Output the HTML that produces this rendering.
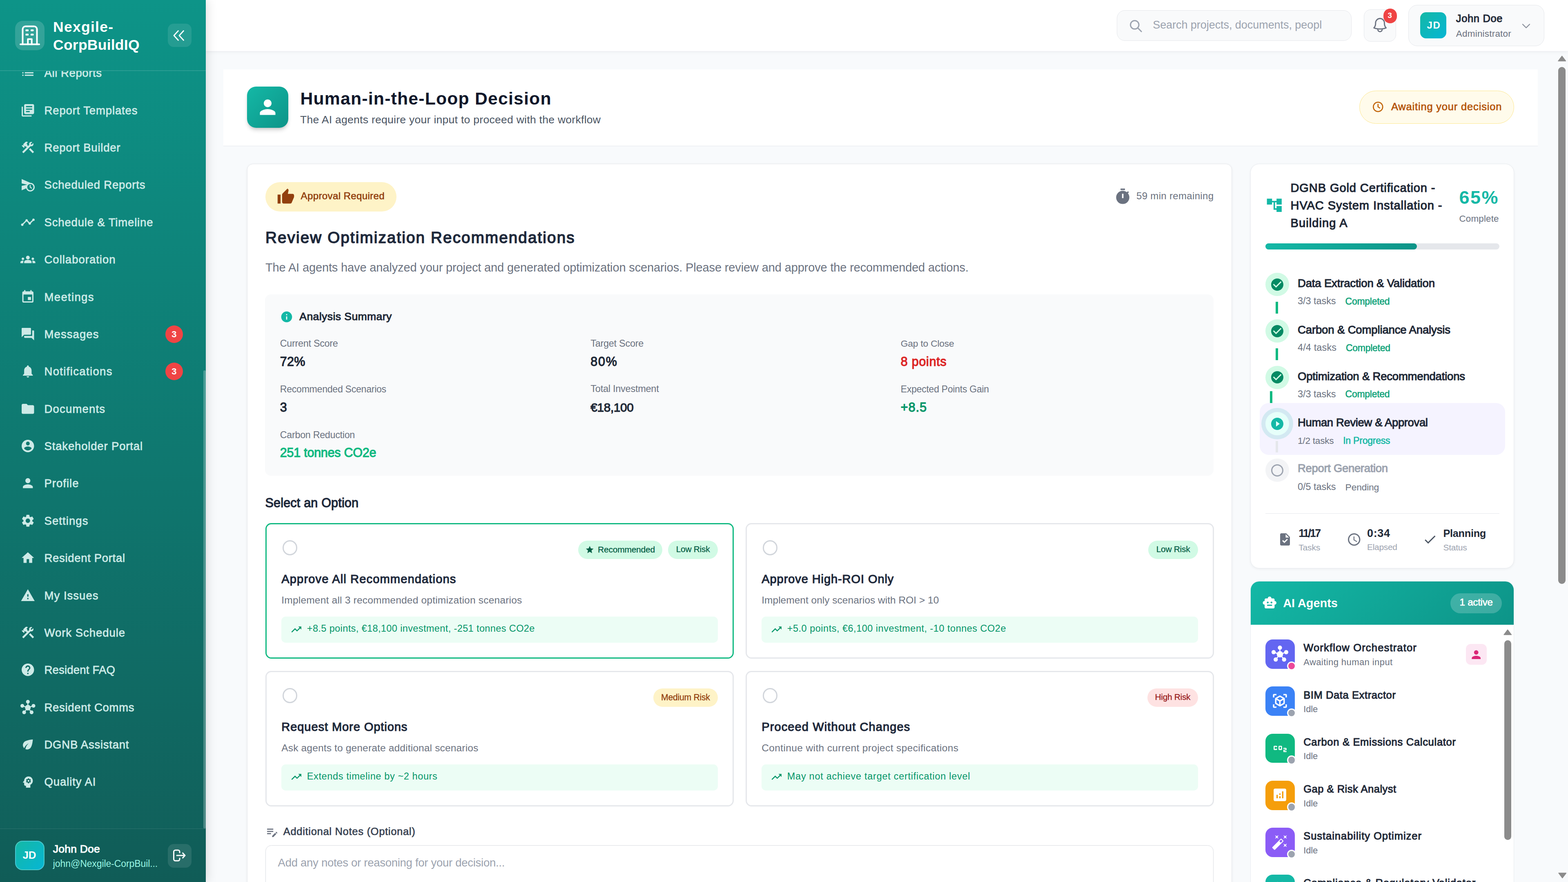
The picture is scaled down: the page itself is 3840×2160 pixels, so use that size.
<!DOCTYPE html><html lang="en"><head><meta charset="utf-8"><title>Human-in-the-Loop Decision - Nexgile-CorpBuildIQ</title><style>
*{box-sizing:border-box;margin:0;padding:0}
html,body{width:3840px;height:2160px;overflow:hidden;background:#f8fafc;font-family:"Liberation Sans",sans-serif}
body{position:relative}
.t{position:absolute;white-space:nowrap;line-height:1;display:block}
.i{position:absolute;display:block}
li{list-style:none}
</style></head><body><main><div style="position:absolute;left:547.0px;top:169.5px;width:3218.5px;height:188.0px;background:#fff;border-bottom:1.8px solid #e5e7eb;"></div><section><div style="position:absolute;left:604.5px;top:212.0px;width:101.0px;height:101.0px;border-radius:22px;background:linear-gradient(135deg,#14b8a6,#0d9488);box-shadow:0 7px 11px -2px rgba(0,0,0,.18),0 3px 6px -2px rgba(0,0,0,.1);"></div><svg class="i" style="left:626.5px;top:234.0px;" width="57.0" height="57.0" viewBox="0 0 24 24"><path fill="#fff" d="M12 12c2.21 0 4-1.79 4-4s-1.79-4-4-4-4 1.79-4 4 1.79 4 4 4zm0 2c-2.67 0-8 1.34-8 4v2h16v-2c0-2.66-5.33-4-8-4z"/></svg><h1 id="t1" class="t" style="left:735.5px;top:219.6px;font-size:42.70px;font-weight:bold;color:#0f172a;letter-spacing:1.225px;">Human-in-the-Loop Decision</h1><p id="t2" class="t" style="left:735.0px;top:280.0px;font-size:26.50px;font-weight:normal;color:#4b5563;letter-spacing:0.286px;">The AI agents require your input to proceed with the workflow</p><div style="position:absolute;left:3328.5px;top:222.0px;width:379.5px;height:81.0px;border-radius:41px;background:#fffbeb;border:1.8px solid #fde68a;"></div><svg class="i" style="left:3361.0px;top:247.5px" width="27.5" height="27.5" viewBox="0 0 24 24"><circle cx="12" cy="12" r="10" fill="none" stroke="#c2650a" stroke-width="2.3"/><path d="M12 6.5V12l3.6 2.3" fill="none" stroke="#c2650a" stroke-width="2.3" stroke-linecap="round" stroke-linejoin="round"/></svg><span id="t3" class="t" style="left:3406.9px;top:248.8px;font-size:25.50px;font-weight:normal;color:#b45309;-webkit-text-stroke:0.71px #b45309;letter-spacing:0.821px;">Awaiting your decision</span></section><section><div style="position:absolute;left:604.5px;top:401.0px;width:2412.0px;height:1900.0px;background:#fff;border:1.8px solid #e5e7eb;border-radius:14.4px;box-shadow:0 2px 6px rgba(0,0,0,.06);"></div><div style="position:absolute;left:650.0px;top:446.0px;width:321.0px;height:72.0px;border-radius:36px;background:#fef3c7;"></div><svg class="i" style="left:678.3px;top:459.5px;" width="44.0" height="44.0" viewBox="0 0 24 24"><path fill="#92400e" d="M1 21h4V9H1v12zm22-11c0-1.1-.9-2-2-2h-6.31l.95-4.57.03-.32c0-.41-.17-.79-.44-1.06L14.17 1 7.59 7.59C7.22 7.95 7 8.45 7 9v10c0 1.1.9 2 2 2h9c.83 0 1.54-.5 1.84-1.22l3.02-7.05c.09-.23.14-.47.14-.73v-2z"/></svg><span id="t4" class="t" style="left:736.6px;top:468.1px;font-size:24.00px;font-weight:normal;color:#92400e;-webkit-text-stroke:0.67px #92400e;letter-spacing:0.388px;">Approval Required</span><svg class="i" style="left:2728.0px;top:460.4px;" width="43.2" height="43.2" viewBox="0 0 24 24"><path fill="#6b7280" d="M9 1h6v2H9zM19.03 7.39l1.42-1.42c-.43-.51-.9-.99-1.41-1.41l-1.42 1.42C16.07 4.74 14.12 4 12 4c-4.97 0-9 4.03-9 9s4.02 9 9 9 9-4.03 9-9c0-2.12-.74-4.07-1.97-5.61zM13 14h-2V8h2v6z"/></svg><span id="t5" class="t" style="left:2783.0px;top:468.4px;font-size:24.00px;font-weight:normal;color:#6b7280;letter-spacing:0.327px;">59 min remaining</span><h2 id="t6" class="t" style="left:650.0px;top:563.2px;font-size:38.50px;font-weight:normal;color:#1e293b;-webkit-text-stroke:1.62px #1e293b;letter-spacing:2.174px;">Review Optimization Recommendations</h2><p id="t7" class="t" style="left:650.0px;top:641.2px;font-size:29.00px;font-weight:normal;color:#6b7280;letter-spacing:-0.136px;">The AI agents have analyzed your project and generated optimization scenarios. Please review and approve the recommended actions.</p><div style="position:absolute;left:649.0px;top:721.0px;width:2323.0px;height:443.5px;background:#f9fafb;border-radius:14.4px;"></div><svg class="i" style="left:685.5px;top:760.0px;" width="32.0" height="32.0" viewBox="0 0 24 24"><path fill="#14b8a6" d="M12 2C6.48 2 2 6.48 2 12s4.48 10 10 10 10-4.48 10-10S17.52 2 12 2zm1 15h-2v-6h2v6zm0-8h-2V7h2v2z"/></svg><h3 id="t8" class="t" style="left:733.3px;top:761.9px;font-size:26.50px;font-weight:normal;color:#1f2937;-webkit-text-stroke:1.11px #1f2937;letter-spacing:0.439px;">Analysis Summary</h3><span id="t9" class="t" style="left:685.8px;top:829.6px;font-size:23.35px;font-weight:normal;color:#6b7280;letter-spacing:-0.280px;">Current Score</span><span id="t10" class="t" style="left:685.8px;top:870.0px;font-size:30.50px;font-weight:normal;color:#1f2937;-webkit-text-stroke:1.28px #1f2937;letter-spacing:0.277px;">72%</span><span id="t11" class="t" style="left:1446.3px;top:829.5px;font-size:23.47px;font-weight:normal;color:#6b7280;letter-spacing:-0.282px;">Target Score</span><span id="t12" class="t" style="left:1446.3px;top:870.0px;font-size:30.50px;font-weight:normal;color:#1f2937;-webkit-text-stroke:1.28px #1f2937;letter-spacing:1.727px;">80%</span><span id="t13" class="t" style="left:2205.8px;top:830.0px;font-size:22.96px;font-weight:normal;color:#6b7280;letter-spacing:-0.276px;">Gap to Close</span><span id="t14" class="t" style="left:2205.8px;top:870.0px;font-size:30.50px;font-weight:normal;color:#dc2626;-webkit-text-stroke:1.28px #dc2626;letter-spacing:0.739px;">8 points</span><span id="t15" class="t" style="left:685.8px;top:941.8px;font-size:23.12px;font-weight:normal;color:#6b7280;letter-spacing:-0.277px;">Recommended Scenarios</span><span id="t16" class="t" style="left:685.8px;top:982.0px;font-size:30.50px;font-weight:normal;color:#1f2937;-webkit-text-stroke:1.28px #1f2937;letter-spacing:0.531px;">3</span><span id="t17" class="t" style="left:1446.3px;top:941.4px;font-size:23.59px;font-weight:normal;color:#6b7280;letter-spacing:-0.283px;">Total Investment</span><span id="t18" class="t" style="left:1446.3px;top:982.6px;font-size:29.78px;font-weight:normal;color:#1f2937;-webkit-text-stroke:1.25px #1f2937;letter-spacing:-0.357px;">€18,100</span><span id="t19" class="t" style="left:2205.8px;top:941.9px;font-size:23.06px;font-weight:normal;color:#6b7280;letter-spacing:-0.277px;">Expected Points Gain</span><span id="t20" class="t" style="left:2205.8px;top:982.0px;font-size:30.50px;font-weight:normal;color:#059669;-webkit-text-stroke:1.28px #059669;letter-spacing:1.094px;">+8.5</span><span id="t21" class="t" style="left:685.8px;top:1053.8px;font-size:23.29px;font-weight:normal;color:#6b7280;letter-spacing:-0.279px;">Carbon Reduction</span><span id="t22" class="t" style="left:685.8px;top:1093.1px;font-size:30.50px;font-weight:normal;color:#10b981;-webkit-text-stroke:1.28px #10b981;letter-spacing:-0.242px;">251 tonnes CO2e</span><h3 id="t23" class="t" style="left:649.5px;top:1215.7px;font-size:30.50px;font-weight:normal;color:#1e293b;-webkit-text-stroke:1.28px #1e293b;letter-spacing:0.199px;">Select an Option</h3><div style="position:absolute;left:650.3px;top:1281.2px;width:1147.0px;height:332.0px;background:#fff;border:3.6px solid #10b981;border-radius:14.4px;"></div><div style="position:absolute;left:691.8px;top:1323.2px;width:36.5px;height:36.5px;border:3.6px solid #d1d5db;border-radius:50%;background:#fff;"></div><div style="position:absolute;left:1636.4px;top:1323.9px;width:121.6px;height:45.0px;border-radius:23px;background:#d1fae5;"></div><span id="t24" class="t" style="left:1655.7px;top:1335.3px;font-size:20.89px;font-weight:normal;color:#065f46;-webkit-text-stroke:0.33px #065f46;letter-spacing:-0.251px;">Low Risk</span><div style="position:absolute;left:1415.6px;top:1323.9px;width:206.0px;height:45.0px;border-radius:23px;background:#d1fae5;"></div><svg class="i" style="left:1433.4px;top:1335.2px;" width="22.5" height="22.5" viewBox="0 0 24 24"><path fill="#065f46" d="M12 17.27L18.18 21l-1.64-7.03L22 9.24l-7.19-.61L12 2 9.19 8.63 2 9.24l5.46 4.73L5.82 21z"/></svg><span id="t25" class="t" style="left:1464.1px;top:1335.2px;font-size:21.02px;font-weight:normal;color:#065f46;-webkit-text-stroke:0.34px #065f46;letter-spacing:-0.252px;">Recommended</span><h4 id="t26" class="t" style="left:689.3px;top:1403.7px;font-size:29.00px;font-weight:normal;color:#1e293b;-webkit-text-stroke:1.22px #1e293b;letter-spacing:1.171px;">Approve All Recommendations</h4><p id="t27" class="t" style="left:689.3px;top:1457.7px;font-size:24.50px;font-weight:normal;color:#6b7280;letter-spacing:0.209px;">Implement all 3 recommended optimization scenarios</p><div style="position:absolute;left:689.3px;top:1510.2px;width:1069.0px;height:64.0px;background:#ecfdf5;border-radius:10.8px;"></div><svg class="i" style="left:710.6px;top:1526.5px;" width="29.4" height="29.4" viewBox="0 0 24 24"><path fill="#059669" d="M16 6l2.29 2.29-4.88 4.88-4-4L2 16.59 3.41 18l6-6 4 4 6.3-6.29L22 12V6z"/></svg><span id="t28" class="t" style="left:751.8px;top:1527.9px;font-size:23.50px;font-weight:normal;color:#059669;letter-spacing:0.389px;">+8.5 points, €18,100 investment, -251 tonnes CO2e</span><div style="position:absolute;left:1826.3px;top:1281.2px;width:1147.0px;height:332.0px;background:#fff;border:3.6px solid #e5e7eb;border-radius:14.4px;"></div><div style="position:absolute;left:1867.8px;top:1323.2px;width:36.5px;height:36.5px;border:3.6px solid #d1d5db;border-radius:50%;background:#fff;"></div><div style="position:absolute;left:2812.4px;top:1323.9px;width:121.6px;height:45.0px;border-radius:23px;background:#d1fae5;"></div><span id="t29" class="t" style="left:2831.7px;top:1335.3px;font-size:20.89px;font-weight:normal;color:#065f46;-webkit-text-stroke:0.33px #065f46;letter-spacing:-0.251px;">Low Risk</span><h4 id="t30" class="t" style="left:1865.3px;top:1403.7px;font-size:29.00px;font-weight:normal;color:#1e293b;-webkit-text-stroke:1.22px #1e293b;letter-spacing:0.919px;">Approve High-ROI Only</h4><p id="t31" class="t" style="left:1865.3px;top:1457.7px;font-size:24.50px;font-weight:normal;color:#6b7280;letter-spacing:0.008px;">Implement only scenarios with ROI &gt; 10</p><div style="position:absolute;left:1865.3px;top:1510.2px;width:1069.0px;height:64.0px;background:#ecfdf5;border-radius:10.8px;"></div><svg class="i" style="left:1886.6px;top:1526.5px;" width="29.4" height="29.4" viewBox="0 0 24 24"><path fill="#059669" d="M16 6l2.29 2.29-4.88 4.88-4-4L2 16.59 3.41 18l6-6 4 4 6.3-6.29L22 12V6z"/></svg><span id="t32" class="t" style="left:1927.8px;top:1527.9px;font-size:23.50px;font-weight:normal;color:#059669;letter-spacing:0.499px;">+5.0 points, €6,100 investment, -10 tonnes CO2e</span><div style="position:absolute;left:650.3px;top:1643.0px;width:1147.0px;height:332.0px;background:#fff;border:3.6px solid #e5e7eb;border-radius:14.4px;"></div><div style="position:absolute;left:691.8px;top:1685.0px;width:36.5px;height:36.5px;border:3.6px solid #d1d5db;border-radius:50%;background:#fff;"></div><div style="position:absolute;left:1600.0px;top:1685.7px;width:158.0px;height:45.0px;border-radius:23px;background:#fef3c7;"></div><span id="t33" class="t" style="left:1619.0px;top:1696.9px;font-size:21.20px;font-weight:normal;color:#92400e;-webkit-text-stroke:0.34px #92400e;letter-spacing:-0.254px;">Medium Risk</span><h4 id="t34" class="t" style="left:689.3px;top:1765.5px;font-size:29.00px;font-weight:normal;color:#1e293b;-webkit-text-stroke:1.22px #1e293b;letter-spacing:0.939px;">Request More Options</h4><p id="t35" class="t" style="left:689.3px;top:1819.5px;font-size:24.50px;font-weight:normal;color:#6b7280;letter-spacing:0.158px;">Ask agents to generate additional scenarios</p><div style="position:absolute;left:689.3px;top:1872.0px;width:1069.0px;height:64.0px;background:#ecfdf5;border-radius:10.8px;"></div><svg class="i" style="left:710.6px;top:1888.3px;" width="29.4" height="29.4" viewBox="0 0 24 24"><path fill="#059669" d="M16 6l2.29 2.29-4.88 4.88-4-4L2 16.59 3.41 18l6-6 4 4 6.3-6.29L22 12V6z"/></svg><span id="t36" class="t" style="left:751.8px;top:1889.7px;font-size:23.50px;font-weight:normal;color:#059669;letter-spacing:0.615px;">Extends timeline by ~2 hours</span><div style="position:absolute;left:1826.3px;top:1643.0px;width:1147.0px;height:332.0px;background:#fff;border:3.6px solid #e5e7eb;border-radius:14.4px;"></div><div style="position:absolute;left:1867.8px;top:1685.0px;width:36.5px;height:36.5px;border:3.6px solid #d1d5db;border-radius:50%;background:#fff;"></div><div style="position:absolute;left:2810.0px;top:1685.7px;width:124.0px;height:45.0px;border-radius:23px;background:#fee2e2;"></div><span id="t37" class="t" style="left:2828.5px;top:1697.2px;font-size:20.80px;font-weight:normal;color:#991b1b;-webkit-text-stroke:0.33px #991b1b;letter-spacing:-0.250px;">High Risk</span><h4 id="t38" class="t" style="left:1865.3px;top:1765.5px;font-size:29.00px;font-weight:normal;color:#1e293b;-webkit-text-stroke:1.22px #1e293b;letter-spacing:1.112px;">Proceed Without Changes</h4><p id="t39" class="t" style="left:1865.3px;top:1819.5px;font-size:24.50px;font-weight:normal;color:#6b7280;letter-spacing:0.371px;">Continue with current project specifications</p><div style="position:absolute;left:1865.3px;top:1872.0px;width:1069.0px;height:64.0px;background:#ecfdf5;border-radius:10.8px;"></div><svg class="i" style="left:1886.6px;top:1888.3px;" width="29.4" height="29.4" viewBox="0 0 24 24"><path fill="#059669" d="M16 6l2.29 2.29-4.88 4.88-4-4L2 16.59 3.41 18l6-6 4 4 6.3-6.29L22 12V6z"/></svg><span id="t40" class="t" style="left:1927.8px;top:1889.7px;font-size:23.50px;font-weight:normal;color:#059669;letter-spacing:0.724px;">May not achieve target certification level</span><svg class="i" style="left:650.3px;top:2021.1px;" width="33.0" height="33.0" viewBox="0 0 24 24"><path fill="#6b7280" d="M3 10h11v2H3v-2zm0-2h11V6H3v2zm0 8h7v-2H3v2zm15.01-3.13l.71-.71c.39-.39 1.02-.39 1.41 0l.71.71c.39.39.39 1.02 0 1.41l-.71.71-2.12-2.12zm-.71.71l-5.3 5.3V21h2.12l5.3-5.3-2.12-2.12z"/></svg><label id="t41" class="t" style="left:693.7px;top:2024.4px;font-size:25.50px;font-weight:normal;color:#374151;-webkit-text-stroke:0.71px #374151;letter-spacing:0.702px;">Additional Notes (Optional)</label><div style="position:absolute;left:650.3px;top:2070.2px;width:2321.5px;height:200.0px;background:#fff;border:1.8px solid #d8dbe0;border-radius:14.4px;"></div><span id="t42" class="t" style="left:680.6px;top:2098.9px;font-size:27.50px;font-weight:normal;color:#9ca3af;letter-spacing:-0.282px;">Add any notes or reasoning for your decision...</span></section><aside><div style="position:absolute;left:3061.5px;top:401.0px;width:646.5px;height:990.5px;background:#fff;border:1.8px solid #e8ebef;border-radius:21.6px;box-shadow:0 2px 6px rgba(0,0,0,.05);"></div><svg class="i" style="left:3098.6px;top:480.8px;" width="43.5" height="43.5" viewBox="0 0 24 24"><path fill="#14b8a6" d="M22 11V3h-7v3H9V3H2v8h7V8h2v10h4v3h7v-8h-7v3h-2V8h2v3z"/></svg><span id="t43" class="t" style="left:3160.5px;top:445.8px;font-size:29.00px;font-weight:normal;color:#1f2937;-webkit-text-stroke:1.22px #1f2937;letter-spacing:0.917px;">DGNB Gold Certification -</span><span id="t44" class="t" style="left:3160.5px;top:488.8px;font-size:29.00px;font-weight:normal;color:#1f2937;-webkit-text-stroke:1.22px #1f2937;letter-spacing:0.937px;">HVAC System Installation -</span><span id="t45" class="t" style="left:3160.5px;top:531.8px;font-size:29.00px;font-weight:normal;color:#1f2937;-webkit-text-stroke:1.22px #1f2937;letter-spacing:1.111px;">Building A</span><span id="t46" class="t" style="left:3573.5px;top:461.2px;font-size:45.00px;font-weight:bold;color:#14b8a6;letter-spacing:2.461px;">65%</span><span id="t47" class="t" style="left:3573.5px;top:525.0px;font-size:22.50px;font-weight:normal;color:#6b7280;letter-spacing:0.100px;">Complete</span><div style="position:absolute;left:3099.4px;top:596.2px;width:573.0px;height:14.6px;background:#e5e7eb;border-radius:8px;"></div><div style="position:absolute;left:3099.4px;top:596.2px;width:371.0px;height:14.6px;background:linear-gradient(90deg,#14b8a6,#0d9488);border-radius:8px;"></div><div style="position:absolute;left:3084.5px;top:987.0px;width:601.5px;height:127.0px;background:#f5f3ff;border-radius:22px;"></div><div style="position:absolute;left:3099.3px;top:667.9px;width:57.6px;height:57.6px;border-radius:50%;background:#d1fae5;"></div><svg class="i" style="left:3110.1px;top:678.7px;" width="36.0" height="36.0" viewBox="0 0 24 24"><path fill="#058a63" d="M12 2C6.48 2 2 6.48 2 12s4.48 10 10 10 10-4.48 10-10S17.52 2 12 2zm-2 15l-5-5 1.41-1.41L10 14.17l7.59-7.59L19 8l-9 9z"/></svg><span id="t48" class="t" style="left:3178.0px;top:680.4px;font-size:27.50px;font-weight:normal;color:#1f2937;-webkit-text-stroke:1.16px #1f2937;letter-spacing:-0.162px;">Data Extraction &amp; Validation</span><span id="t49" class="t" style="left:3178.0px;top:726.4px;font-size:23.50px;font-weight:normal;color:#6b7280;letter-spacing:-0.056px;">3/3 tasks</span><span id="t50" class="t" style="left:3294.6px;top:726.8px;font-size:22.99px;font-weight:normal;color:#10a37a;-webkit-text-stroke:0.64px #10a37a;letter-spacing:-0.276px;">Completed</span><div style="position:absolute;left:3099.3px;top:781.7px;width:57.6px;height:57.6px;border-radius:50%;background:#d1fae5;"></div><svg class="i" style="left:3110.1px;top:792.5px;" width="36.0" height="36.0" viewBox="0 0 24 24"><path fill="#058a63" d="M12 2C6.48 2 2 6.48 2 12s4.48 10 10 10 10-4.48 10-10S17.52 2 12 2zm-2 15l-5-5 1.41-1.41L10 14.17l7.59-7.59L19 8l-9 9z"/></svg><span id="t51" class="t" style="left:3178.0px;top:794.2px;font-size:27.50px;font-weight:normal;color:#1f2937;-webkit-text-stroke:1.16px #1f2937;letter-spacing:-0.132px;">Carbon &amp; Compliance Analysis</span><span id="t52" class="t" style="left:3178.0px;top:840.2px;font-size:23.50px;font-weight:normal;color:#6b7280;letter-spacing:0.119px;">4/4 tasks</span><span id="t53" class="t" style="left:3296.0px;top:840.6px;font-size:22.99px;font-weight:normal;color:#10a37a;-webkit-text-stroke:0.64px #10a37a;letter-spacing:-0.276px;">Completed</span><div style="position:absolute;left:3099.3px;top:895.5px;width:57.6px;height:57.6px;border-radius:50%;background:#d1fae5;"></div><svg class="i" style="left:3110.1px;top:906.3px;" width="36.0" height="36.0" viewBox="0 0 24 24"><path fill="#058a63" d="M12 2C6.48 2 2 6.48 2 12s4.48 10 10 10 10-4.48 10-10S17.52 2 12 2zm-2 15l-5-5 1.41-1.41L10 14.17l7.59-7.59L19 8l-9 9z"/></svg><span id="t54" class="t" style="left:3178.0px;top:908.0px;font-size:27.50px;font-weight:normal;color:#1f2937;-webkit-text-stroke:1.16px #1f2937;letter-spacing:-0.198px;">Optimization &amp; Recommendations</span><span id="t55" class="t" style="left:3178.0px;top:954.0px;font-size:23.50px;font-weight:normal;color:#6b7280;letter-spacing:-0.056px;">3/3 tasks</span><span id="t56" class="t" style="left:3294.6px;top:954.4px;font-size:22.99px;font-weight:normal;color:#10a37a;-webkit-text-stroke:0.64px #10a37a;letter-spacing:-0.276px;">Completed</span><div style="position:absolute;left:3099.3px;top:1008.9px;width:57.6px;height:57.6px;border-radius:50%;background:#e6fffa;box-shadow:0 0 0 10px rgba(20,184,166,.15);"></div><svg class="i" style="left:3110.1px;top:1019.7px;" width="36.0" height="36.0" viewBox="0 0 24 24"><path fill="#14b8a6" d="M12 2C6.48 2 2 6.48 2 12s4.48 10 10 10 10-4.48 10-10S17.52 2 12 2zm-2 14.5v-9l6 4.5-6 4.5z"/></svg><span id="t57" class="t" style="left:3178.0px;top:1020.5px;font-size:27.43px;font-weight:normal;color:#1f2937;-webkit-text-stroke:1.15px #1f2937;letter-spacing:-0.329px;">Human Review &amp; Approval</span><span id="t58" class="t" style="left:3178.0px;top:1068.1px;font-size:22.71px;font-weight:normal;color:#6b7280;letter-spacing:-0.273px;">1/2 tasks</span><span id="t59" class="t" style="left:3289.2px;top:1067.7px;font-size:23.13px;font-weight:normal;color:#14b8a6;-webkit-text-stroke:0.65px #14b8a6;letter-spacing:-0.278px;">In Progress</span><div style="position:absolute;left:3099.3px;top:1122.7px;width:57.6px;height:57.6px;border-radius:50%;background:#f3f4f6;"></div><svg class="i" style="left:3110.1px;top:1133.5px;" width="36.0" height="36.0" viewBox="0 0 24 24"><path fill="#9ca3af" d="M12 2C6.48 2 2 6.48 2 12s4.48 10 10 10 10-4.48 10-10S17.52 2 12 2zm0 18c-4.42 0-8-3.58-8-8s3.58-8 8-8 8 3.58 8 8-3.58 8-8 8z"/></svg><span id="t60" class="t" style="left:3178.0px;top:1133.2px;font-size:27.50px;font-weight:normal;color:#9ca3af;-webkit-text-stroke:1.16px #9ca3af;letter-spacing:-0.328px;">Report Generation</span><span id="t61" class="t" style="left:3178.0px;top:1181.2px;font-size:23.50px;font-weight:normal;color:#6b7280;letter-spacing:-0.056px;">0/5 tasks</span><span id="t62" class="t" style="left:3294.6px;top:1181.6px;font-size:22.98px;font-weight:normal;color:#6b7280;letter-spacing:-0.276px;">Pending</span><div style="position:absolute;left:3124.4px;top:739.0px;width:5.4px;height:28.6px;background:#10b981;"></div><div style="position:absolute;left:3124.4px;top:853.0px;width:5.4px;height:28.6px;background:#10b981;"></div><div style="position:absolute;left:3110.2px;top:958.3px;width:5.4px;height:28.7px;background:#10b981;"></div><div style="position:absolute;left:3124.4px;top:1080.0px;width:5.4px;height:28.0px;background:#e5e7eb;"></div><div style="position:absolute;left:3099.4px;top:1256.7px;width:573.0px;height:1.8px;background:#e5e7eb;"></div><svg class="i" style="left:3129.3px;top:1302.6px;" width="36.0" height="36.0" viewBox="0 0 24 24"><path fill="#6b7280" d="M14 2H6c-1.1 0-1.99.9-1.99 2L4 20c0 1.1.89 2 1.99 2H18c1.1 0 2-.9 2-2V8l-6-6zm-3.06 16L7.4 14.46l1.41-1.41 2.12 2.12 4.24-4.24 1.41 1.41L10.94 18zM13 9V3.5L18.5 9H13z"/></svg><span id="t63" class="t" style="left:3180.3px;top:1292.7px;font-size:26.86px;font-weight:bold;color:#1f2937;letter-spacing:-2.686px;">11/17</span><span id="t64" class="t" style="left:3180.3px;top:1329.9px;font-size:21.13px;font-weight:normal;color:#9ca3af;letter-spacing:-0.254px;">Tasks</span><svg class="i" style="left:3297.8px;top:1302.8px;" width="36.5" height="36.5" viewBox="0 0 24 24"><path fill="#6b7280" d="M11.99 2C6.47 2 2 6.48 2 12s4.47 10 9.99 10C17.52 22 22 17.52 22 12S17.52 2 11.99 2zM12 20c-4.42 0-8-3.58-8-8s3.58-8 8-8 8 3.58 8 8-3.58 8-8 8zm.5-13H11v6l5.25 3.15.75-1.23-4.5-2.67z"/></svg><span id="t65" class="t" style="left:3348.0px;top:1292.5px;font-size:27.00px;font-weight:bold;color:#1f2937;letter-spacing:0.651px;">0:34</span><span id="t66" class="t" style="left:3348.0px;top:1330.1px;font-size:20.89px;font-weight:normal;color:#9ca3af;letter-spacing:-0.251px;">Elapsed</span><svg class="i" style="left:3484.3px;top:1303.0px;" width="36.0" height="36.0" viewBox="0 0 24 24"><path fill="#4b5563" d="M9 16.17L4.83 12l-1.42 1.41L9 19 21 7l-1.41-1.41z"/></svg><span id="t67" class="t" style="left:3534.4px;top:1293.9px;font-size:25.37px;font-weight:bold;color:#1f2937;letter-spacing:-0.304px;">Planning</span><span id="t68" class="t" style="left:3534.4px;top:1330.0px;font-size:21.08px;font-weight:normal;color:#9ca3af;letter-spacing:-0.253px;">Status</span></aside><aside><div style="position:absolute;left:3062.0px;top:1423.0px;width:646.0px;height:800.0px;background:#fff;border:1.8px solid #e8ebef;border-radius:21.6px;overflow:hidden;"><div style="position:absolute;left:-1.8px;top:-1.8px;width:646px;height:108px;background:linear-gradient(135deg,#14b8a6 0%,#0d9488 100%)"></div></div><svg class="i" style="left:3091.1px;top:1458.2px;" width="36.5" height="36.5" viewBox="0 0 24 24"><path fill="#fff" d="M20 9V7c0-1.1-.9-2-2-2h-3c0-1.66-1.34-3-3-3S9 3.34 9 5H6c-1.1 0-2 .9-2 2v2c-1.66 0-3 1.34-3 3s1.34 3 3 3v4c0 1.1.9 2 2 2h12c1.1 0 2-.9 2-2v-4c1.66 0 3-1.34 3-3s-1.34-3-3-3zM7.5 11.5c0-.83.67-1.5 1.5-1.5s1.5.67 1.5 1.5S9.83 13 9 13s-1.5-.67-1.5-1.5zM16 17H8v-2h8v2zm-1-4c-.83 0-1.5-.67-1.5-1.5S14.17 10 15 10s1.5.67 1.5 1.5S15.83 13 15 13z"/></svg><h3 id="t69" class="t" style="left:3142.2px;top:1463.4px;font-size:29.00px;font-weight:bold;color:#fff;letter-spacing:-0.073px;">AI Agents</h3><div style="position:absolute;left:3552.2px;top:1452.8px;width:126.0px;height:49.0px;border-radius:25px;background:rgba(255,255,255,.2);"></div><span id="t70" class="t" style="left:3574.5px;top:1462.9px;font-size:24.24px;font-weight:normal;color:#fff;-webkit-text-stroke:0.68px #fff;letter-spacing:-0.291px;">1 active</span><svg class="i" style="left:3682.0px;top:1541.0px" width="20.5" height="14.5" viewBox="0 0 20 14"><path d="M10 1.2 L19 13 H1 Z" fill="#8b8b8b" stroke="#8b8b8b" stroke-width="1.5" stroke-linejoin="round"/></svg><div style="position:absolute;left:3683.7px;top:1567.8px;width:17.0px;height:489.0px;background:#8b8b8b;border-radius:9px;"></div><div style="position:absolute;left:3099.0px;top:1566.2px;width:71.8px;height:71.8px;border-radius:18px;background:#6366f1;"></div><svg class="i" style="left:3114.1px;top:1580.7px;" width="41.0" height="41.0" viewBox="0 0 24 24"><path fill="#fff" d="M8.4 18.2c.38.5.6 1.12.6 1.8 0 1.66-1.34 3-3 3s-3-1.34-3-3 1.34-3 3-3c.44 0 .85.09 1.23.26l1.41-1.77c-.92-1.03-1.29-2.39-1.09-3.69l-2.03-.68C4.98 11.95 4.06 12.5 3 12.5c-1.66 0-3-1.34-3-3s1.34-3 3-3 3 1.34 3 3c0 .07 0 .14-.01.21l2.03.68c.64-1.21 1.82-2.09 3.22-2.32V5.91C9.96 5.57 9 4.4 9 3c0-1.66 1.34-3 3-3s3 1.34 3 3c0 1.4-.96 2.57-2.25 2.91v2.16c1.4.23 2.58 1.11 3.22 2.32l2.03-.68C18 9.64 18 9.57 18 9.5c0-1.66 1.34-3 3-3s3 1.34 3 3-1.34 3-3 3c-1.06 0-1.98-.55-2.52-1.37l-2.03.68c.2 1.29-.16 2.65-1.09 3.69l1.41 1.77c.38-.17.79-.26 1.23-.26 1.66 0 3 1.34 3 3s-1.34 3-3 3-3-1.34-3-3c0-.68.22-1.3.6-1.8l-1.41-1.77c-1.35.75-3.01.76-4.37 0L8.4 18.2z"/></svg><div style="position:absolute;left:3151.5px;top:1619.7px;width:22.5px;height:22.5px;border-radius:50%;background:#ec4899;border:3.6px solid #fff;"></div><span id="t71" class="t" style="left:3192.2px;top:1574.4px;font-size:25.50px;font-weight:normal;color:#1f2937;-webkit-text-stroke:1.07px #1f2937;letter-spacing:1.171px;">Workflow Orchestrator</span><span id="t72" class="t" style="left:3192.2px;top:1611.0px;font-size:22.00px;font-weight:normal;color:#6b7280;letter-spacing:0.423px;">Awaiting human input</span><div style="position:absolute;left:3099.0px;top:1681.4px;width:71.8px;height:71.8px;border-radius:18px;background:#3b82f6;"></div><svg class="i" style="left:3114.1px;top:1695.9px;" width="41.0" height="41.0" viewBox="0 0 24 24"><path fill="#fff" d="M18.25 7.6l-5.5-3.18c-.46-.27-1.04-.27-1.5 0L5.75 7.6c-.46.27-.75.76-.75 1.3v6.35c0 .54.29 1.03.75 1.3l5.5 3.18c.46.27 1.04.27 1.5 0l5.5-3.18c.46-.27.75-.76.75-1.3V8.9c0-.54-.29-1.03-.75-1.3zM7 14.96v-4.62l4 2.32v4.61l-4-2.31zm5-4.03L8 8.61l4-2.31 4 2.31-4 2.32zm1 6.34v-4.61l4-2.32v4.62l-4 2.31zM7 2H3.5C2.67 2 2 2.67 2 3.5V7h2V4h3V2zm10 0h3.5c.83 0 1.5.67 1.5 1.5V7h-2V4h-3V2zM7 22H3.5c-.83 0-1.5-.67-1.5-1.5V17h2v3h3v2zm10 0h3.5c.83 0 1.5-.67 1.5-1.5V17h-2v3h-3v2z"/></svg><div style="position:absolute;left:3151.5px;top:1734.9px;width:22.5px;height:22.5px;border-radius:50%;background:#9ca3af;border:3.6px solid #fff;"></div><span id="t73" class="t" style="left:3192.2px;top:1689.6px;font-size:25.50px;font-weight:normal;color:#1f2937;-webkit-text-stroke:1.07px #1f2937;letter-spacing:0.606px;">BIM Data Extractor</span><span id="t74" class="t" style="left:3192.2px;top:1726.2px;font-size:22.00px;font-weight:normal;color:#6b7280;letter-spacing:-0.161px;">Idle</span><div style="position:absolute;left:3099.0px;top:1796.6px;width:71.8px;height:71.8px;border-radius:18px;background:#10b981;"></div><svg class="i" style="left:3114.1px;top:1811.1px;" width="41.0" height="41.0" viewBox="0 0 24 24"><path fill="#fff" d="M14 9h-3c-.55 0-1 .45-1 1v4c0 .55.45 1 1 1h3c.55 0 1-.45 1-1v-4c0-.55-.45-1-1-1zm-.5 4.5h-2v-3h2v3zM8 13v1c0 .55-.45 1-1 1H4c-.55 0-1-.45-1-1v-4c0-.55.45-1 1-1h3c.55 0 1 .45 1 1v1H6.5v-.5h-2v3h2V13H8zm12.5 2.5h-2v1h3V18H17v-2.5c0-.55.45-1 1-1h2v-1h-3V12h3.5c.55 0 1 .45 1 1v1.5c0 .55-.45 1-1 1z"/></svg><div style="position:absolute;left:3151.5px;top:1850.1px;width:22.5px;height:22.5px;border-radius:50%;background:#9ca3af;border:3.6px solid #fff;"></div><span id="t75" class="t" style="left:3192.2px;top:1804.8px;font-size:25.50px;font-weight:normal;color:#1f2937;-webkit-text-stroke:1.07px #1f2937;letter-spacing:0.710px;">Carbon &amp; Emissions Calculator</span><span id="t76" class="t" style="left:3192.2px;top:1841.4px;font-size:22.00px;font-weight:normal;color:#6b7280;letter-spacing:-0.161px;">Idle</span><div style="position:absolute;left:3099.0px;top:1911.8px;width:71.8px;height:71.8px;border-radius:18px;background:#f59e0b;"></div><svg class="i" style="left:3114.1px;top:1926.3px;" width="41.0" height="41.0" viewBox="0 0 24 24"><path fill="#fff" d="M19 3H5c-1.1 0-2 .9-2 2v14c0 1.1.9 2 2 2h14c1.1 0 2-.9 2-2V5c0-1.1-.9-2-2-2zM9 17H7v-5h2v5zm4 0h-2v-3h2v3zm0-5h-2v-2h2v2zm4 5h-2V7h2v10z"/></svg><div style="position:absolute;left:3151.5px;top:1965.3px;width:22.5px;height:22.5px;border-radius:50%;background:#9ca3af;border:3.6px solid #fff;"></div><span id="t77" class="t" style="left:3192.2px;top:1920.0px;font-size:25.50px;font-weight:normal;color:#1f2937;-webkit-text-stroke:1.07px #1f2937;letter-spacing:0.514px;">Gap &amp; Risk Analyst</span><span id="t78" class="t" style="left:3192.2px;top:1956.6px;font-size:22.00px;font-weight:normal;color:#6b7280;letter-spacing:-0.161px;">Idle</span><div style="position:absolute;left:3099.0px;top:2027.0px;width:71.8px;height:71.8px;border-radius:18px;background:#8b5cf6;"></div><svg class="i" style="left:3114.1px;top:2041.5px;" width="41.0" height="41.0" viewBox="0 0 24 24"><path fill="#fff" d="M7.5 5.6L10 7 8.6 4.5 10 2 7.5 3.4 5 2l1.4 2.5L5 7zm12 9.8L17 14l1.4 2.5L17 19l2.5-1.4L22 19l-1.4-2.5L22 14zM22 2l-2.5 1.4L17 2l1.4 2.5L17 7l2.5-1.4L22 7l-1.4-2.5zm-7.63 5.29c-.39-.39-1.02-.39-1.41 0L1.29 18.96c-.39.39-.39 1.02 0 1.41l2.34 2.34c.39.39 1.02.39 1.41 0L16.7 11.05c.39-.39.39-1.02 0-1.41l-2.33-2.35zm-1.03 5.49l-2.12-2.12 2.44-2.44 2.12 2.12-2.44 2.44z"/></svg><div style="position:absolute;left:3151.5px;top:2080.5px;width:22.5px;height:22.5px;border-radius:50%;background:#9ca3af;border:3.6px solid #fff;"></div><span id="t79" class="t" style="left:3192.2px;top:2035.2px;font-size:25.50px;font-weight:normal;color:#1f2937;-webkit-text-stroke:1.07px #1f2937;letter-spacing:0.968px;">Sustainability Optimizer</span><span id="t80" class="t" style="left:3192.2px;top:2071.8px;font-size:22.00px;font-weight:normal;color:#6b7280;letter-spacing:-0.161px;">Idle</span><div style="position:absolute;left:3099.0px;top:2142.2px;width:71.8px;height:71.8px;border-radius:18px;background:#14b8a6;"></div><svg class="i" style="left:3114.1px;top:2156.7px;" width="41.0" height="41.0" viewBox="0 0 24 24"><path fill="#fff" d="M23 12l-2.44-2.79.34-3.69-3.61-.82-1.89-3.2L12 2.96 8.6 1.5 6.71 4.69 3.1 5.5l.34 3.7L1 12l2.44 2.79-.34 3.7 3.61.82L8.6 22.5l3.4-1.47 3.4 1.46 1.89-3.19 3.61-.82-.34-3.69L23 12zm-12.91 4.72l-3.8-3.81 1.48-1.48 2.32 2.33 5.85-5.87 1.48 1.48-7.33 7.35z"/></svg><div style="position:absolute;left:3151.5px;top:2195.7px;width:22.5px;height:22.5px;border-radius:50%;background:#9ca3af;border:3.6px solid #fff;"></div><span id="t81" class="t" style="left:3192.2px;top:2150.4px;font-size:25.50px;font-weight:normal;color:#1f2937;-webkit-text-stroke:1.07px #1f2937;letter-spacing:0.813px;">Compliance &amp; Regulatory Validator</span><span id="t82" class="t" style="left:3192.2px;top:2187.0px;font-size:22.00px;font-weight:normal;color:#6b7280;letter-spacing:-0.161px;">Idle</span><div style="position:absolute;left:3589.8px;top:1577.3px;width:51.0px;height:51.0px;border-radius:12px;background:#fce7f3;"></div><svg class="i" style="left:3599.1px;top:1586.6px;" width="32.4" height="32.4" viewBox="0 0 24 24"><path fill="#db2777" d="M12 12c2.21 0 4-1.79 4-4s-1.79-4-4-4-4 1.79-4 4 1.79 4 4 4zm0 2c-2.67 0-8 1.34-8 4v2h16v-2c0-2.66-5.33-4-8-4z"/></svg></aside><svg class="i" style="left:3814.8px;top:136.4px" width="20.5" height="14.5" viewBox="0 0 20 14"><path d="M10 1.2 L19 13 H1 Z" fill="#8b8b8b" stroke="#8b8b8b" stroke-width="1.5" stroke-linejoin="round"/></svg><div style="position:absolute;left:3816.0px;top:163.5px;width:17.6px;height:1266.0px;background:#8b8b8b;border-radius:9px;"></div><svg class="i" style="left:3815.5px;top:2136.6px" width="20.5" height="14.5" viewBox="0 0 20 14"><path d="M10 12.8 L19 1 H1 Z" fill="#8b8b8b" stroke="#8b8b8b" stroke-width="1.5" stroke-linejoin="round"/></svg></main><header><div style="position:absolute;left:504.0px;top:0.0px;width:3336.0px;height:126.0px;background:#fff;border-bottom:1.8px solid #eef0f3;box-shadow:0 2px 8px rgba(0,0,0,.05);"></div><div style="position:absolute;left:2735.0px;top:24.8px;width:574.6px;height:75.4px;background:#f9fafb;border:1.8px solid #e5e7eb;border-radius:20px;"></div><svg class="i" style="left:2764.8px;top:46.5px" width="32.5" height="32.5" viewBox="0 0 24 24"><circle cx="10.2" cy="10.2" r="7.6" fill="none" stroke="#9ca3af" stroke-width="2.2"/><path d="M15.8 15.8L22.3 22.3" stroke="#9ca3af" stroke-width="2.2" stroke-linecap="round"/></svg><span id="t83" class="t" style="left:2823.2px;top:47.8px;font-size:27.00px;font-weight:normal;color:#9ca3af;letter-spacing:-0.054px;">Search projects, documents, peopl</span><div style="position:absolute;left:3339.7px;top:22.5px;width:79.0px;height:79.0px;background:#f9fafb;border:1.8px solid #e5e7eb;border-radius:17px;"></div><svg class="i" style="left:3358.4px;top:38.9px" width="43.2" height="45.0" viewBox="0 0 24 25"><path d="M14.86 17.6a24 24 0 0 0 5.45-1.31A8.97 8.97 0 0 1 18 10.25V9.5a6 6 0 1 0-12 0v.75a8.97 8.97 0 0 1-2.31 6.02c1.73.64 3.56 1.09 5.45 1.31m5.72 0a24.3 24.3 0 0 1-5.72 0m5.72 0a3 3 0 1 1-5.72 0" fill="none" stroke="#6b7280" stroke-width="1.6" stroke-linecap="round" stroke-linejoin="round"/></svg><div style="position:absolute;left:3387.6px;top:20.5px;width:33.4px;height:36.5px;border-radius:17px;background:#ef4444;"></div><span id="t84" class="t" style="left:3398.5px;top:28.9px;font-size:18.50px;font-weight:bold;color:#fff;letter-spacing:1.203px;">3</span><div style="position:absolute;left:3448.7px;top:12.2px;width:333.3px;height:100.4px;background:#f9fafb;border:1.8px solid #e5e7eb;border-radius:22px;"></div><div style="position:absolute;left:3478.4px;top:30.2px;width:64.0px;height:64.0px;border-radius:14.4px;background:linear-gradient(135deg,#14b8a6,#06b6d4);"></div><span id="t85" class="t" style="left:3494.5px;top:49.6px;font-size:24.00px;font-weight:bold;color:#fff;letter-spacing:1.612px;">JD</span><span id="t86" class="t" style="left:3565.8px;top:32.7px;font-size:25.50px;font-weight:normal;color:#1f2937;-webkit-text-stroke:1.07px #1f2937;letter-spacing:0.647px;">John Doe</span><span id="t87" class="t" style="left:3565.8px;top:71.7px;font-size:22.50px;font-weight:normal;color:#6b7280;letter-spacing:0.204px;">Administrator</span><svg class="i" style="left:3727.0px;top:56.5px" width="21.0" height="14.0" viewBox="0 0 21 14"><path d="M2 2.5L10.5 11L19 2.5" fill="none" stroke="#8b919c" stroke-width="2.4" stroke-linecap="round" stroke-linejoin="round"/></svg></header><nav><div style="position:absolute;left:0.0px;top:0.0px;width:504.0px;height:2160.0px;background:linear-gradient(180deg,#0d9488 0%,#0f766e 55%,#115e59 100%);box-shadow:4px 0 24px rgba(0,0,0,.12);"></div><div style="position:absolute;left:37.0px;top:51.0px;width:72.0px;height:72.0px;border-radius:19px;background:rgba(255,255,255,.16);"></div><svg class="i" style="left:46.0px;top:58.0px" width="54.0" height="56.0" viewBox="0 0 54 56"><g fill="none" stroke="#fff" stroke-width="4" stroke-linecap="round" stroke-linejoin="round"><path d="M9.5 50.5V13.5a7 7 0 0 1 7-7h21a7 7 0 0 1 7 7v37"/><path d="M4 50.5h46"/><path d="M22.3 50.5V37.8h9.4v12.7"/></g><g fill="#fff"><rect x="16.5" y="14" width="7.5" height="4.6" rx="1.5"/><rect x="29" y="14" width="7.5" height="4.6" rx="1.5"/><rect x="16.5" y="24.5" width="7.5" height="4.6" rx="1.5"/><rect x="29" y="24.5" width="7.5" height="4.6" rx="1.5"/></g></svg><span id="t88" class="t" style="left:130.0px;top:48.5px;font-size:35.50px;font-weight:bold;color:#fff;letter-spacing:1.270px;">Nexgile-</span><span id="t89" class="t" style="left:130.0px;top:92.8px;font-size:35.50px;font-weight:bold;color:#fff;letter-spacing:0.247px;">CorpBuildIQ</span><div style="position:absolute;left:411.0px;top:57.5px;width:57.6px;height:57.6px;border-radius:14.4px;background:rgba(255,255,255,.1);"></div><svg class="i" style="left:423.0px;top:73.0px" width="30.0" height="28.0" viewBox="0 0 30 28"><path d="M13.5 2.5L3 14l10.5 11.5M26.5 2.5L16 14l10.5 11.5" fill="none" stroke="#fff" stroke-width="2.8" stroke-linecap="round" stroke-linejoin="round"/></svg><div style="position:absolute;left:0.0px;top:172.3px;width:504.0px;height:1.8px;background:rgba(255,255,255,.12);"></div><ul style="position:absolute;left:0.0px;top:174.1px;width:504.0px;height:1855.1px;overflow:hidden;"><li><svg class="i" style="left:50.2px;top:-13.8px;" width="36.5" height="36.5" viewBox="0 0 24 24"><path fill="#cdeae7" d="M3 13h2v-2H3v2zm0 4h2v-2H3v2zm0-8h2V7H3v2zm4 4h14v-2H7v2zm0 4h14v-2H7v2zM7 7v2h14V7H7z"/></svg><span id="t90" class="t" style="left:108.5px;top:-8.8px;font-size:27.50px;font-weight:normal;color:#cdeae7;-webkit-text-stroke:0.77px #cdeae7;letter-spacing:0.600px;">All Reports</span></li><li><svg class="i" style="left:50.2px;top:77.6px;" width="36.5" height="36.5" viewBox="0 0 24 24"><path fill="#cdeae7" d="M4 6H2v14c0 1.1.9 2 2 2h14v-2H4V6zm16-4H8c-1.1 0-2 .9-2 2v12c0 1.1.9 2 2 2h12c1.1 0 2-.9 2-2V4c0-1.1-.9-2-2-2zm-1 9H9V9h10v2zm-4 4H9v-2h6v2zm4-8H9V5h10v2z"/></svg><span id="t91" class="t" style="left:108.5px;top:82.6px;font-size:27.50px;font-weight:normal;color:#cdeae7;-webkit-text-stroke:0.77px #cdeae7;letter-spacing:0.865px;">Report Templates</span></li><li><svg class="i" style="left:50.2px;top:169.0px;" width="36.5" height="36.5" viewBox="0 0 24 24"><path fill="#cdeae7" d="M13.783 15.172l2.121-2.121 5.996 5.996-2.121 2.121zM17.5 10c1.93 0 3.5-1.57 3.5-3.5 0-.58-.16-1.12-.41-1.6l-2.7 2.7-1.49-1.49 2.7-2.7c-.48-.25-1.02-.41-1.6-.41C15.57 3 14 4.57 14 6.5c0 .41.08.8.21 1.16l-1.85 1.85-1.78-1.78.71-.71-1.41-1.41L12 3.49c-1.17-1.17-3.07-1.17-4.24 0L4.22 7.03l1.41 1.41H2.81l-.71.71 3.54 3.54.71-.71V9.15l1.41 1.41.71-.71 1.78 1.78-7.41 7.41 2.12 2.12L16.34 9.79c.36.13.75.21 1.16.21z"/></svg><span id="t92" class="t" style="left:108.5px;top:174.0px;font-size:27.50px;font-weight:normal;color:#cdeae7;-webkit-text-stroke:0.77px #cdeae7;letter-spacing:0.785px;">Report Builder</span></li><li><svg class="i" style="left:50.2px;top:260.4px;" width="36.5" height="36.5" viewBox="0 0 24 24"><path fill="#cdeae7" d="M16.5 12.5H15v4l3 2 .75-1.23-2.25-1.52V12.5zM16 9L2 3v7l9 2-9 2v7l7.27-3.11C10.09 20.83 12.79 23 16 23c3.86 0 7-3.14 7-7s-3.14-7-7-7zm0 12c-2.75 0-4.98-2.22-5-4.97v-.07c.02-2.74 2.25-4.97 5-4.97 2.76 0 5 2.24 5 5S18.76 21 16 21z"/></svg><span id="t93" class="t" style="left:108.5px;top:265.4px;font-size:27.50px;font-weight:normal;color:#cdeae7;-webkit-text-stroke:0.77px #cdeae7;letter-spacing:0.818px;">Scheduled Reports</span></li><li><svg class="i" style="left:50.2px;top:351.8px;" width="36.5" height="36.5" viewBox="0 0 24 24"><path fill="#cdeae7" d="M23 8c0 1.1-.9 2-2 2-.18 0-.35-.02-.51-.07l-3.56 3.55c.05.16.07.34.07.52 0 1.1-.9 2-2 2s-2-.9-2-2c0-.18.02-.36.07-.52l-2.55-2.55c-.16.05-.34.07-.52.07s-.36-.02-.52-.07l-4.55 4.56c.05.16.07.33.07.51 0 1.1-.9 2-2 2s-2-.9-2-2 .9-2 2-2c.18 0 .35.02.51.07l4.56-4.55C8.02 9.36 8 9.18 8 9c0-1.1.9-2 2-2s2 .9 2 2c0 .18-.02.36-.07.52l2.55 2.55c.16-.05.34-.07.52-.07s.36.02.52.07l3.55-3.56C19.02 8.35 19 8.18 19 8c0-1.1.9-2 2-2s2 .9 2 2z"/></svg><span id="t94" class="t" style="left:108.5px;top:356.7px;font-size:27.50px;font-weight:normal;color:#cdeae7;-webkit-text-stroke:0.77px #cdeae7;letter-spacing:0.850px;">Schedule &amp; Timeline</span></li><li><svg class="i" style="left:50.2px;top:443.1px;" width="36.5" height="36.5" viewBox="0 0 24 24"><path fill="#cdeae7" d="M12 12.75c1.63 0 3.07.39 4.24.9 1.08.48 1.76 1.56 1.76 2.73V18H6v-1.61c0-1.18.68-2.26 1.76-2.73 1.17-.52 2.61-.91 4.24-.91zM4 13c1.1 0 2-.9 2-2s-.9-2-2-2-2 .9-2 2 .9 2 2 2zm1.13 1.1c-.37-.06-.74-.1-1.13-.1-.99 0-1.93.21-2.78.58C.48 14.9 0 15.62 0 16.43V18h4.5v-1.61c0-.83.23-1.61.63-2.29zM20 13c1.1 0 2-.9 2-2s-.9-2-2-2-2 .9-2 2 .9 2 2 2zm4 3.43c0-.81-.48-1.53-1.22-1.85-.85-.37-1.79-.58-2.78-.58-.39 0-.76.04-1.13.1.4.68.63 1.46.63 2.29V18H24v-1.57zM12 6c1.66 0 3 1.34 3 3s-1.34 3-3 3-3-1.34-3-3 1.34-3 3-3z"/></svg><span id="t95" class="t" style="left:108.5px;top:448.1px;font-size:27.50px;font-weight:normal;color:#cdeae7;-webkit-text-stroke:0.77px #cdeae7;letter-spacing:0.996px;">Collaboration</span></li><li><svg class="i" style="left:50.2px;top:534.5px;" width="36.5" height="36.5" viewBox="0 0 24 24"><path fill="#cdeae7" d="M17 12h-5v5h5v-5zM16 1v2H8V1H6v2H5c-1.11 0-1.99.9-1.99 2L3 19c0 1.1.89 2 2 2h14c1.1 0 2-.9 2-2V5c0-1.1-.9-2-2-2h-1V1h-2zm3 18H5V8h14v11z"/></svg><span id="t96" class="t" style="left:108.5px;top:539.5px;font-size:27.50px;font-weight:normal;color:#cdeae7;-webkit-text-stroke:0.77px #cdeae7;letter-spacing:1.344px;">Meetings</span></li><li><svg class="i" style="left:50.2px;top:625.9px;" width="36.5" height="36.5" viewBox="0 0 24 24"><path fill="#cdeae7" d="M21 6h-2v9H6v2c0 .55.45 1 1 1h11l4 4V7c0-.55-.45-1-1-1zm-4 6V3c0-.55-.45-1-1-1H3c-.55 0-1 .45-1 1v14l4-4h10c.55 0 1-.45 1-1z"/></svg><span id="t97" class="t" style="left:108.5px;top:630.9px;font-size:27.50px;font-weight:normal;color:#cdeae7;-webkit-text-stroke:0.77px #cdeae7;letter-spacing:1.094px;">Messages</span><div style="position:absolute;left:404.8px;top:622.6px;width:43.2px;height:43.2px;border-radius:50%;background:#ef4444;"></div><span id="t98" class="t" style="left:420.3px;top:633.5px;font-size:22.00px;font-weight:bold;color:#fff;letter-spacing:0.250px;">3</span></li><li><svg class="i" style="left:50.2px;top:717.3px;" width="36.5" height="36.5" viewBox="0 0 24 24"><path fill="#cdeae7" d="M12 22c1.1 0 2-.9 2-2h-4c0 1.1.89 2 2 2zm6-6v-5c0-3.07-1.64-5.64-4.5-6.32V4c0-.83-.67-1.5-1.5-1.5s-1.5.67-1.5 1.5v.68C7.63 5.36 6 7.92 6 11v5l-2 2v1h16v-1l-2-2z"/></svg><span id="t99" class="t" style="left:108.5px;top:722.3px;font-size:27.50px;font-weight:normal;color:#cdeae7;-webkit-text-stroke:0.77px #cdeae7;letter-spacing:1.350px;">Notifications</span><div style="position:absolute;left:404.8px;top:713.9px;width:43.2px;height:43.2px;border-radius:50%;background:#ef4444;"></div><span id="t100" class="t" style="left:420.3px;top:724.9px;font-size:22.00px;font-weight:bold;color:#fff;letter-spacing:0.250px;">3</span></li><li><svg class="i" style="left:50.2px;top:808.7px;" width="36.5" height="36.5" viewBox="0 0 24 24"><path fill="#cdeae7" d="M10 4H4c-1.1 0-1.99.9-1.99 2L2 18c0 1.1.9 2 2 2h16c1.1 0 2-.9 2-2V8c0-1.1-.9-2-2-2h-8l-2-2z"/></svg><span id="t101" class="t" style="left:108.5px;top:813.6px;font-size:27.50px;font-weight:normal;color:#cdeae7;-webkit-text-stroke:0.77px #cdeae7;letter-spacing:1.176px;">Documents</span></li><li><svg class="i" style="left:50.2px;top:900.0px;" width="36.5" height="36.5" viewBox="0 0 24 24"><path fill="#cdeae7" d="M12 2C6.48 2 2 6.48 2 12s4.48 10 10 10 10-4.48 10-10S17.52 2 12 2zm0 3c1.66 0 3 1.34 3 3s-1.34 3-3 3-3-1.34-3-3 1.34-3 3-3zm0 14.2c-2.5 0-4.71-1.28-6-3.22.03-1.99 4-3.08 6-3.08 1.99 0 5.97 1.09 6 3.08-1.29 1.94-3.5 3.22-6 3.22z"/></svg><span id="t102" class="t" style="left:108.5px;top:905.0px;font-size:27.50px;font-weight:normal;color:#cdeae7;-webkit-text-stroke:0.77px #cdeae7;letter-spacing:0.838px;">Stakeholder Portal</span></li><li><svg class="i" style="left:50.2px;top:991.4px;" width="36.5" height="36.5" viewBox="0 0 24 24"><path fill="#cdeae7" d="M12 12c2.21 0 4-1.79 4-4s-1.79-4-4-4-4 1.79-4 4 1.79 4 4 4zm0 2c-2.67 0-8 1.34-8 4v2h16v-2c0-2.66-5.33-4-8-4z"/></svg><span id="t103" class="t" style="left:108.5px;top:996.4px;font-size:27.50px;font-weight:normal;color:#cdeae7;-webkit-text-stroke:0.77px #cdeae7;letter-spacing:1.008px;">Profile</span></li><li><svg class="i" style="left:50.2px;top:1082.8px;" width="36.5" height="36.5" viewBox="0 0 24 24"><path fill="#cdeae7" d="M19.14 12.94c.04-.3.06-.61.06-.94 0-.32-.02-.64-.07-.94l2.03-1.58c.18-.14.23-.41.12-.61l-1.92-3.32c-.12-.22-.37-.29-.59-.22l-2.39.96c-.5-.38-1.03-.7-1.62-.94l-.36-2.54c-.04-.24-.24-.41-.48-.41h-3.84c-.24 0-.43.17-.47.41l-.36 2.54c-.59.24-1.13.57-1.62.94l-2.39-.96c-.22-.08-.47 0-.59.22L2.74 8.87c-.12.21-.08.47.12.61l2.03 1.58c-.05.3-.09.63-.09.94s.02.64.07.94l-2.03 1.58c-.18.14-.23.41-.12.61l1.92 3.32c.12.22.37.29.59.22l2.39-.96c.5.38 1.03.7 1.62.94l.36 2.54c.05.24.24.41.48.41h3.84c.24 0 .44-.17.47-.41l.36-2.54c.59-.24 1.13-.56 1.62-.94l2.39.96c.22.08.47 0 .59-.22l1.92-3.32c.12-.22.07-.47-.12-.61l-2.01-1.58zM12 15.6c-1.98 0-3.6-1.62-3.6-3.6s1.62-3.6 3.6-3.6 3.6 1.62 3.6 3.6-1.62 3.6-3.6 3.6z"/></svg><span id="t104" class="t" style="left:108.5px;top:1087.8px;font-size:27.50px;font-weight:normal;color:#cdeae7;-webkit-text-stroke:0.77px #cdeae7;letter-spacing:1.089px;">Settings</span></li><li><svg class="i" style="left:50.2px;top:1174.2px;" width="36.5" height="36.5" viewBox="0 0 24 24"><path fill="#cdeae7" d="M10 20v-6h4v6h5v-8h3L12 3 2 12h3v8z"/></svg><span id="t105" class="t" style="left:108.5px;top:1179.2px;font-size:27.50px;font-weight:normal;color:#cdeae7;-webkit-text-stroke:0.77px #cdeae7;letter-spacing:0.677px;">Resident Portal</span></li><li><svg class="i" style="left:50.2px;top:1265.6px;" width="36.5" height="36.5" viewBox="0 0 24 24"><path fill="#cdeae7" d="M1 21h22L12 2 1 21zm12-3h-2v-2h2v2zm0-4h-2v-4h2v4z"/></svg><span id="t106" class="t" style="left:108.5px;top:1270.5px;font-size:27.50px;font-weight:normal;color:#cdeae7;-webkit-text-stroke:0.77px #cdeae7;letter-spacing:1.027px;">My Issues</span></li><li><svg class="i" style="left:50.2px;top:1356.9px;" width="36.5" height="36.5" viewBox="0 0 24 24"><path fill="#cdeae7" d="M13.783 15.172l2.121-2.121 5.996 5.996-2.121 2.121zM17.5 10c1.93 0 3.5-1.57 3.5-3.5 0-.58-.16-1.12-.41-1.6l-2.7 2.7-1.49-1.49 2.7-2.7c-.48-.25-1.02-.41-1.6-.41C15.57 3 14 4.57 14 6.5c0 .41.08.8.21 1.16l-1.85 1.85-1.78-1.78.71-.71-1.41-1.41L12 3.49c-1.17-1.17-3.07-1.17-4.24 0L4.22 7.03l1.41 1.41H2.81l-.71.71 3.54 3.54.71-.71V9.15l1.41 1.41.71-.71 1.78 1.78-7.41 7.41 2.12 2.12L16.34 9.79c.36.13.75.21 1.16.21z"/></svg><span id="t107" class="t" style="left:108.5px;top:1361.9px;font-size:27.50px;font-weight:normal;color:#cdeae7;-webkit-text-stroke:0.77px #cdeae7;letter-spacing:0.968px;">Work Schedule</span></li><li><svg class="i" style="left:50.2px;top:1448.3px;" width="36.5" height="36.5" viewBox="0 0 24 24"><path fill="#cdeae7" d="M12 2C6.48 2 2 6.48 2 12s4.48 10 10 10 10-4.48 10-10S17.52 2 12 2zm1 17h-2v-2h2v2zm2.07-7.75l-.9.92C13.45 12.9 13 13.5 13 15h-2v-.5c0-1.1.45-2.1 1.17-2.83l1.24-1.26c.37-.36.59-.86.59-1.41 0-1.1-.9-2-2-2s-2 .9-2 2H8c0-2.21 1.79-4 4-4s4 1.79 4 4c0 .88-.36 1.68-.93 2.25z"/></svg><span id="t108" class="t" style="left:108.5px;top:1453.3px;font-size:27.50px;font-weight:normal;color:#cdeae7;-webkit-text-stroke:0.77px #cdeae7;letter-spacing:0.209px;">Resident FAQ</span></li><li><svg class="i" style="left:50.2px;top:1539.7px;" width="36.5" height="36.5" viewBox="0 0 24 24"><path fill="#cdeae7" d="M8.4 18.2c.38.5.6 1.12.6 1.8 0 1.66-1.34 3-3 3s-3-1.34-3-3 1.34-3 3-3c.44 0 .85.09 1.23.26l1.41-1.77c-.92-1.03-1.29-2.39-1.09-3.69l-2.03-.68C4.98 11.95 4.06 12.5 3 12.5c-1.66 0-3-1.34-3-3s1.34-3 3-3 3 1.34 3 3c0 .07 0 .14-.01.21l2.03.68c.64-1.21 1.82-2.09 3.22-2.32V5.91C9.96 5.57 9 4.4 9 3c0-1.66 1.34-3 3-3s3 1.34 3 3c0 1.4-.96 2.57-2.25 2.91v2.16c1.4.23 2.58 1.11 3.22 2.32l2.03-.68C18 9.64 18 9.57 18 9.5c0-1.66 1.34-3 3-3s3 1.34 3 3-1.34 3-3 3c-1.06 0-1.98-.55-2.52-1.37l-2.03.68c.2 1.29-.16 2.65-1.09 3.69l1.41 1.77c.38-.17.79-.26 1.23-.26 1.66 0 3 1.34 3 3s-1.34 3-3 3-3-1.34-3-3c0-.68.22-1.3.6-1.8l-1.41-1.77c-1.35.75-3.01.76-4.37 0L8.4 18.2z"/></svg><span id="t109" class="t" style="left:108.5px;top:1544.7px;font-size:27.50px;font-weight:normal;color:#cdeae7;-webkit-text-stroke:0.77px #cdeae7;letter-spacing:0.700px;">Resident Comms</span></li><li><svg class="i" style="left:50.2px;top:1631.1px;" width="36.5" height="36.5" viewBox="0 0 24 24"><path fill="#cdeae7" d="M6.05 8.05c-2.73 2.73-2.73 7.15-.02 9.88 1.47-3.4 4.09-6.24 7.36-7.93-2.77 2.34-4.71 5.61-5.39 9.32 2.6 1.23 5.8.78 7.95-1.37C19.43 14.47 20 4 20 4S9.53 4.57 6.05 8.05z"/></svg><span id="t110" class="t" style="left:108.5px;top:1636.1px;font-size:27.50px;font-weight:normal;color:#cdeae7;-webkit-text-stroke:0.77px #cdeae7;letter-spacing:0.757px;">DGNB Assistant</span></li><li><svg class="i" style="left:50.2px;top:1722.5px;" width="36.5" height="36.5" viewBox="0 0 24 24"><path fill="#cdeae7" d="M13 8.57c-.79 0-1.43.64-1.43 1.43s.64 1.43 1.43 1.43 1.43-.64 1.43-1.43-.64-1.43-1.43-1.43zM13 3C9.25 3 6.2 5.94 6.02 9.64L4.1 12.2c-.25.33-.01.8.4.8H6v3c0 1.1.9 2 2 2h1v3h7v-4.68c2.36-1.12 4-3.53 4-6.32 0-3.87-3.13-7-7-7zm3 7c0 .13-.01.26-.02.39l.83.66c.08.06.1.16.05.25l-.8 1.39c-.05.09-.16.12-.24.09l-.99-.4c-.21.16-.43.29-.67.39L14 13.83c-.01.1-.1.17-.2.17h-1.6c-.1 0-.18-.07-.2-.17l-.15-1.06c-.25-.1-.47-.23-.68-.39l-.99.4c-.09.03-.2 0-.25-.09l-.8-1.39c-.05-.08-.03-.19.05-.25l.84-.66c-.01-.13-.02-.26-.02-.39s.02-.27.04-.39l-.85-.66c-.08-.06-.1-.16-.05-.26l.8-1.38c.05-.09.15-.12.24-.09l1 .4c.2-.15.43-.29.67-.39L12 6.17c.02-.1.1-.17.2-.17h1.6c.1 0 .18.07.2.17l.15 1.06c.24.1.46.23.67.39l1-.4c.09-.03.2 0 .24.09l.8 1.38c.05.09.03.2-.05.26l-.85.66c.03.12.04.25.04.39z"/></svg><span id="t111" class="t" style="left:108.5px;top:1727.4px;font-size:27.50px;font-weight:normal;color:#cdeae7;-webkit-text-stroke:0.77px #cdeae7;letter-spacing:0.922px;">Quality AI</span></li></ul><div style="position:absolute;left:498.0px;top:907.0px;width:6.0px;height:1122.0px;background:rgba(255,255,255,.25);border-radius:3px;"></div><div style="position:absolute;left:0.0px;top:2029.2px;width:504.0px;height:131.0px;background:rgba(0,0,0,.02);border-top:1.8px solid rgba(255,255,255,.12);"></div><div style="position:absolute;left:37.3px;top:2059.2px;width:71.5px;height:71.5px;border-radius:18px;background:linear-gradient(135deg,#14b8a6,#06b6d4);border:2.5px solid rgba(255,255,255,.25);"></div><span id="t112" class="t" style="left:55.6px;top:2082.4px;font-size:25.89px;font-weight:bold;color:#fff;letter-spacing:-0.311px;">JD</span><span id="t113" class="t" style="left:129.8px;top:2066.0px;font-size:26.50px;font-weight:normal;color:#fff;-webkit-text-stroke:1.11px #fff;letter-spacing:0.221px;">John Doe</span><span id="t114" class="t" style="left:129.8px;top:2103.5px;font-size:23.00px;font-weight:normal;color:#99f6e4;letter-spacing:-0.095px;">john@Nexgile-CorpBuil...</span><div style="position:absolute;left:411.2px;top:2067.0px;width:58.0px;height:58.0px;border-radius:14.4px;background:rgba(255,255,255,.1);"></div><svg class="i" style="left:422.0px;top:2079.0px" width="34.0" height="32.0" viewBox="0 0 34 32"><g fill="none" stroke="#fff" stroke-width="3" stroke-linecap="round" stroke-linejoin="round"><path d="M18 9V7a4 4 0 0 0-4-4H7.5a4 4 0 0 0-4 4v18a4 4 0 0 0 4 4H14a4 4 0 0 0 4-4v-2"/><path d="M11 16h20M25.5 10l5.5 6-5.5 6"/></g></svg></nav></body></html>
